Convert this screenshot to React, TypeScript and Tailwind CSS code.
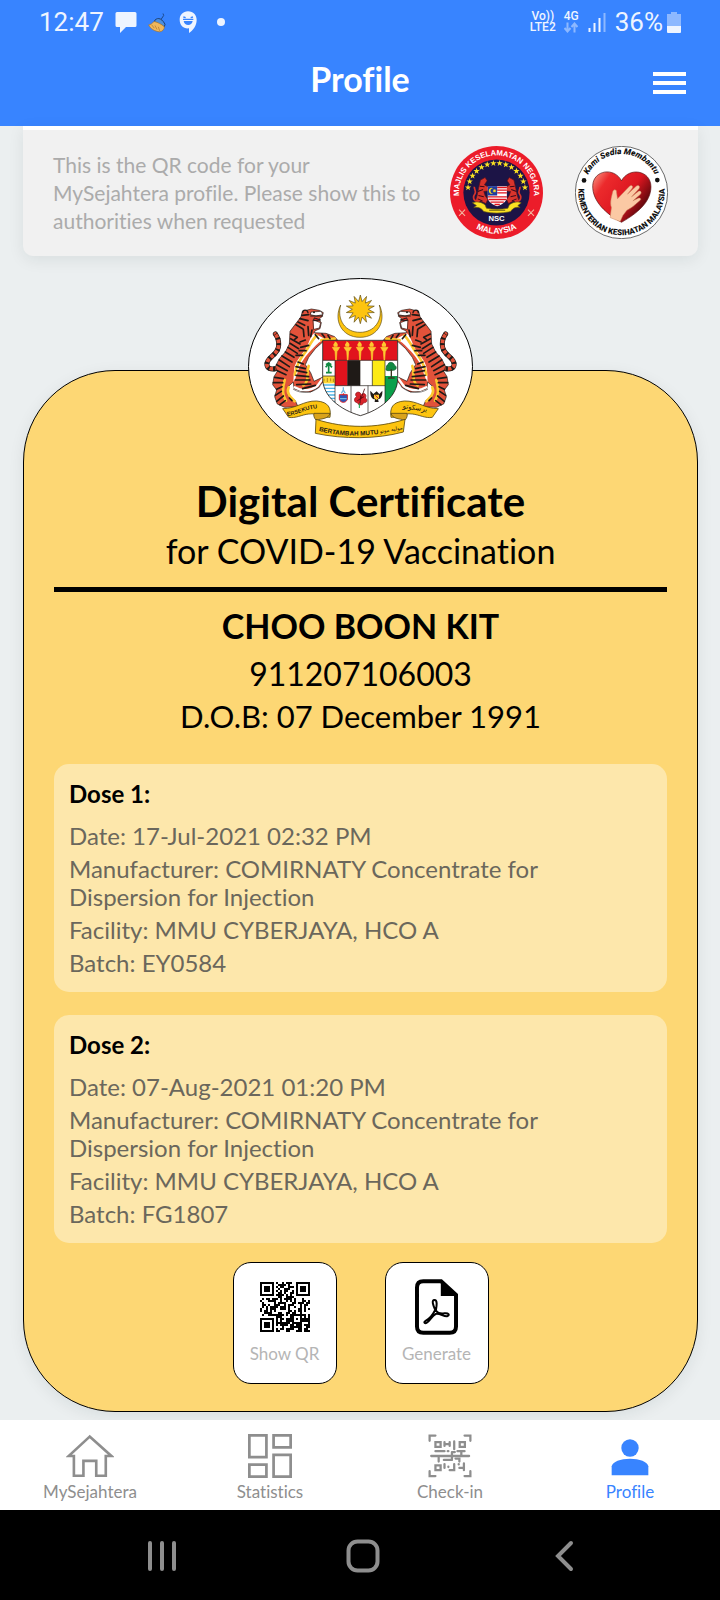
import React from 'react';

const doses = [
  {
    title: 'Dose 1:',
    lines: [
      'Date: 17-Jul-2021 02:32 PM',
      'Manufacturer: COMIRNATY Concentrate for Dispersion for Injection',
      'Facility: MMU CYBERJAYA, HCO A',
      'Batch: EY0584',
    ],
  },
  {
    title: 'Dose 2:',
    lines: [
      'Date: 07-Aug-2021 01:20 PM',
      'Manufacturer: COMIRNATY Concentrate for Dispersion for Injection',
      'Facility: MMU CYBERJAYA, HCO A',
      'Batch: FG1807',
    ],
  },
];

function starPoints(cx: number, cy: number, outer: number, inner: number, tips: number) {
  const points: string[] = [];
  for (let i = 0; i < tips * 2; i++) {
    const r = i % 2 === 0 ? outer : inner;
    const a = (Math.PI * i) / tips - Math.PI / 2;
    points.push(`${(cx + r * Math.cos(a)).toFixed(1)},${(cy + r * Math.sin(a)).toFixed(1)}`);
  }
  return points.join(' ');
}

function Tiger() {
  return (
    <g strokeLinecap="round" strokeLinejoin="round">
      <path d="M106 296C82 300 76 286 84 272C92 258 116 250 116 226C117 208 112 200 106 192" fill="none" stroke="#1f1a17" strokeWidth="15" />
      <path d="M106 296C82 300 76 286 84 272C92 258 116 250 116 226C117 208 112 200 106 192" fill="none" stroke="#e2523a" strokeWidth="11" />
      <path d="M106 296C82 300 76 286 84 272C92 258 116 250 116 226C117 208 112 200 106 192" fill="none" stroke="#1f1a17" strokeWidth="14" strokeDasharray="6 11" strokeLinecap="butt" />
      <path
        d="M188 124L214 117L238 121L250 128L246 140L236 148L244 158L240 176L226 182L222 188L258 190L284 200L294 212L248 216L226 236L206 262L196 284L212 308L222 334L247 322L250 334L236 352L212 366L184 364L162 356L160 336L142 352L144 376L166 392L174 410L134 412L112 402L104 380L110 360L98 344L102 320L112 304L106 290L118 266L136 246L148 222L150 184L168 160L182 142Z"
        fill="#e2523a"
        stroke="#1f1a17"
        strokeWidth="2"
      />
      <path d="M222 190C206 206 208 226 190 246C178 264 164 278 162 300L160 336C170 322 172 306 178 290C190 264 212 240 236 218L254 206Z" fill="#fff" />
      <path d="M230 196C212 214 206 234 192 252C178 270 170 286 164 314M206 288C198 308 210 334 190 346M146 352C138 370 152 382 164 394M244 210L284 206M134 330C128 350 126 374 138 392" fill="none" stroke="#fdc82f" strokeWidth="8" />
      <path d="M164 352C180 362 208 366 232 348L248 326" fill="none" stroke="#fff" strokeWidth="7" />
      <path d="M160 358C182 372 216 372 240 350" fill="none" stroke="#1f1a17" strokeWidth="1.5" />
      <path
        d="M152 192L172 202L164 208M152 206L180 222M150 220L176 236M144 232L172 250M136 246L162 262M126 258L156 276M118 270L148 290M110 284L142 302M112 302L138 314M104 322L130 326M100 338L128 338M110 358L126 350M106 376L124 364M110 394L130 378M120 404L136 392M168 164L188 176M174 156L194 166M180 146L204 152M186 136L206 134M190 178L192 200M204 170L206 196M216 180L212 200M196 210L180 216M206 226L182 232M198 242L178 242M188 256L168 256M174 276L190 282M168 290L196 296M170 302L200 308M168 316L206 320M166 330L210 330M170 344L212 342M188 356L226 346M148 384L156 392M226 194L236 206M246 192L254 202M264 196L270 206"
        stroke="#1f1a17"
        strokeWidth="5"
        fill="none"
      />
      <path d="M214 126L244 124L248 134L228 138L212 134ZM220 150L242 158L238 174L222 178Z" fill="#fff" stroke="#1f1a17" strokeWidth="2" />
      <path d="M212 138L248 138M224 144L242 150L222 152Z" stroke="#1f1a17" strokeWidth="3" fill="#d8232a" />
      <circle cx="222" cy="127" r="3" fill="#1f1a17" />
      <path d="M188 128C188 118 202 118 204 128" fill="#e2523a" stroke="#1f1a17" strokeWidth="4" />
    </g>
  );
}

function Torch({ x }: { x: number }) {
  return (
    <g>
      <path d={`M${x - 11} 232H${x + 11}L${x + 5} 242H${x - 5}ZM${x - 3} 242H${x + 3}L${x + 1} 270H${x - 1}Z`} fill="#fdc82f" stroke="#fdc82f" strokeWidth="2" />
      <path d={`M${x - 6} 230C${x - 12} 220 ${x - 2} 222 ${x - 4} 214C${x + 4} 218 ${x + 8} 224 ${x + 4} 230Z`} fill="#fdc82f" />
    </g>
  );
}

function CoatOfArms() {
  return (
    <svg viewBox="24 24 675 531" className="w-[225px] h-[177px]" role="img" aria-label="Coat of arms of Malaysia">
      <defs>
        <clipPath id="shield">
          <path d="M248 211H473V325C473 380 420 420 361 437C302 420 248 380 248 325Z" />
        </clipPath>
        <path id="motto-left" d="M142 438C176 434 206 412 248 414" />
        <path id="motto-mid" d="M236 482C290 498 350 500 414 492" />
      </defs>
      <ellipse cx="361.5" cy="289.5" rx="336" ry="264" fill="#fff" stroke="#000" strokeWidth="3" />
      <path d="M302 105C280 150 304 202 360 202C416 202 440 150 418 105C430 150 404 187 360 187C316 187 290 150 302 105Z" fill="#fdc40f" stroke="#5c4a12" strokeWidth="2" />
      <polygon points={starPoints(361, 118, 43, 24, 14)} fill="#fdc40f" stroke="#5c4a12" strokeWidth="2" />
      <Tiger />
      <g transform="translate(723 0) scale(-1 1)">
        <Tiger />
      </g>
      <g clipPath="url(#shield)">
        <rect x="248" y="211" width="225" height="230" fill="#fff" />
        <rect x="248" y="211" width="225" height="60" fill="#e1131d" />
        <rect x="285" y="271" width="38" height="76" fill="#e1131d" />
        <rect x="323" y="271" width="37" height="76" fill="#1f1a17" />
        <rect x="397" y="271" width="38" height="76" fill="#fdea14" />
        <rect x="248" y="318" width="37" height="22" fill="#fdd835" />
        <path d="M248 345H285M248 355H285M248 365H285M248 375H285M248 385H285M248 395H285" stroke="#4fb4e6" strokeWidth="4" />
        <rect x="435" y="318" width="40" height="110" fill="#0aa04b" />
        <path d="M285 271V402M323 271V347M360 271V347M397 271V347M435 271V402M285 347H435M333 347V426M384 347V430M248 271H473M248 318H285" stroke="#1f1a17" strokeWidth="2" fill="none" />
      </g>
      <path d="M248 211H473V325C473 380 420 420 361 437C302 420 248 380 248 325Z" fill="none" stroke="#1f1a17" strokeWidth="2.5" />
      <Torch x={288} />
      <Torch x={323} />
      <Torch x={360} />
      <Torch x={396} />
      <Torch x={433} />
      <path d="M266 280V306M258 308H275M258 284L266 279L274 284M257 292L266 281L276 292" stroke="#118a43" strokeWidth="5" fill="none" />
      <path d="M252 334V326M262 336V324M272 334V325M280 336V326" stroke="#b58b18" strokeWidth="3" />
      <path d="M439 294C438 284 446 284 446 279C454 274 462 280 463 285C472 290 470 300 460 301L444 302C438 302 436 298 439 294Z" fill="#118a43" stroke="#0b5a2a" strokeWidth="2" />
      <path d="M454 298V322M444 324H464" stroke="#3a3a20" strokeWidth="4" />
      <path d="M298 374H322V388C318 400 302 400 298 388Z" fill="#2b57b5" stroke="#d8232a" strokeWidth="3" />
      <path d="M300 386H320M304 370L310 360L316 370M310 352V362" stroke="#6fb7e2" strokeWidth="4" fill="none" />
      <path d="M306 376L310 368L314 376Z" fill="#d8232a" />
      <path d="M360 368C350 362 342 374 350 380C340 384 342 398 352 398C356 408 370 406 370 398C382 400 384 388 376 384C382 374 372 366 364 374Z" fill="#d8232a" stroke="#8d1016" strokeWidth="2" />
      <path d="M363 386L374 356M352 392L372 380M362 376L360 400" stroke="#520a0e" strokeWidth="2.5" />
      <path d="M358 400V414" stroke="#0aa04b" strokeWidth="3" />
      <path d="M391 362C390 378 396 388 405 388L404 396H416L414 388C424 386 428 376 427 362L418 372L410 364L400 372Z" fill="#1f1a17" />
      <path d="M402 374H417V384L410 390L402 384Z" fill="#fdc82f" />
      <path d="M406 376L414 384" stroke="#d8232a" strokeWidth="3" />
      <path d="M128 416C170 416 190 392 230 393C266 396 274 414 270 442L232 440C222 428 216 432 206 432C186 434 166 446 146 442Z" fill="#fdc40f" stroke="#5c4a12" strokeWidth="2.5" />
      <path d="M595 416C553 416 533 392 493 393C457 396 449 414 453 442L491 440C501 428 507 432 517 432C537 434 557 446 577 442Z" fill="#fdc40f" stroke="#5c4a12" strokeWidth="2.5" />
      <path d="M222 430L270 430C266 446 248 446 228 450C222 444 220 436 222 430ZM501 430L453 430C457 446 475 446 495 450C501 444 503 436 501 430Z" fill="#d9a31b" stroke="#5c4a12" strokeWidth="2.5" />
      <path d="M228 448C316 476 408 476 495 448L490 486C410 508 310 508 226 490Z" fill="#fdc40f" stroke="#5c4a12" strokeWidth="2.5" />
      <g fill="#1f1a17" className="font-['Liberation_Sans',sans-serif] font-bold">
        <text fontSize="17"><textPath href="#motto-left">ERSEKUTU</textPath></text>
        <text fontSize="19"><textPath href="#motto-mid">BERTAMBAH MUTU</textPath></text>
      </g>
      <g fill="#1f1a17" className="font-['DejaVu_Sans',sans-serif]">
        <text fontSize="16" textAnchor="middle" transform="translate(454 484) rotate(-10)">موليه موتو</text>
        <text fontSize="21" textAnchor="middle" transform="translate(524 420) rotate(8)">برسكوتو</text>
      </g>
    </svg>
  );
}

function CouncilSeal() {
  const stars = Array.from({ length: 14 }, (_, i) => {
    const a = Math.PI + 0.15 + ((Math.PI - 0.3) * i) / 13;
    return starPoints(170 + 86 * Math.cos(a), 185 + 86 * Math.sin(a), 10, 4, 5);
  });
  return (
    <svg viewBox="31 48 278 278" className="size-[93px] shrink-0" role="img" aria-label="Majlis Keselamatan Negara">
      <defs>
        <path id="nsc-top" d="M62 218A112 112 0 1 1 278 218" />
        <path id="nsc-bottom" d="M54 230A124 124 0 0 0 286 230" />
      </defs>
      <circle cx="170" cy="187" r="139" fill="#ec1c2a" />
      <circle cx="170" cy="187" r="99" fill="#1c1446" />
      <g fill="#fff" className="font-['Liberation_Sans',sans-serif] font-bold">
        <text fontSize="23" textAnchor="middle"><textPath href="#nsc-top" startOffset="50%">MAJLIS KESELAMATAN NEGARA</textPath></text>
        <text fontSize="25" textAnchor="middle"><textPath href="#nsc-bottom" startOffset="50%">MALAYSIA</textPath></text>
        <text x="170" y="273" fontSize="23" textAnchor="middle">NSC</text>
      </g>
      {stars.map((s) => (
        <polygon key={s} points={s} fill="#fbe122" />
      ))}
      <path d="M58 238L76 257M76 238L58 257M264 238L282 257M282 238L264 257" stroke="#f3b8a0" strokeWidth="3" />
      <g id="nsc-tiger">
        <path d="M122 150L136 142L142 152L134 164L148 172L146 182L132 184L136 196L144 208L138 220L122 212L114 222L106 214L112 196L116 176Z" fill="#d8342c" stroke="#5b1018" strokeWidth="2" />
        <path d="M114 184L130 178M116 196L132 200M120 168L134 170M114 206L128 212" stroke="#39091a" strokeWidth="3" />
        <path d="M112 214C98 210 100 198 106 190C110 182 102 176 104 170" stroke="#d8342c" strokeWidth="5" fill="none" />
      </g>
      <use href="#nsc-tiger" transform="translate(344 0) scale(-1 1)" />
      <path d="M144 168H201V204C198 216 184 224 172 228C160 224 146 216 144 204Z" fill="#fff" />
      <path d="M172 172H201M172 180H201M172 188H201M144 200H201M146 208H199M152 216H192M164 223H180" stroke="#e1131d" strokeWidth="4" />
      <rect x="144" y="168" width="28" height="28" fill="#203a9c" />
      <path d="M160 174A9 9 0 1 0 160 190A7 7 0 1 1 160 174Z" fill="#fbe122" />
      <polygon points={starPoints(164, 182, 6, 3, 10)} fill="#fbe122" />
      <path d="M98 218C110 212 126 216 136 224L140 234C160 238 184 238 204 234L208 224C218 216 234 212 244 218L234 226L240 232C228 230 220 232 212 244C184 250 158 250 132 244C124 232 114 230 102 232L110 226Z" fill="#fbe122" stroke="#6a5a10" strokeWidth="2" />
      <path d="M148 240H196" stroke="#6a5a10" strokeWidth="3" />
    </svg>
  );
}

function MinistrySeal() {
  return (
    <svg viewBox="405 48 278 278" className="size-[93px] shrink-0" role="img" aria-label="Kementerian Kesihatan Malaysia">
      <defs>
        <linearGradient id="heart" x1="0" y1="0" x2="1" y2="0.6">
          <stop offset="0" stopColor="#f9a08c" />
          <stop offset="0.25" stopColor="#ec2a2c" />
          <stop offset="0.65" stopColor="#dc1620" />
          <stop offset="1" stopColor="#4a0508" />
        </linearGradient>
        <path id="moh-top" d="M434 163A112 112 0 0 1 654 163" />
        <path id="moh-bottom" d="M418 158A129 129 0 1 0 670 158" />
      </defs>
      <circle cx="544" cy="187" r="138" fill="#fff" stroke="#222" strokeWidth="2" />
      <g fill="#111" className="font-[Roboto,sans-serif] font-black">
        <text fontSize="25" fontStyle="italic" textAnchor="middle"><textPath href="#moh-top" startOffset="50%">Kami Sedia Membantu</textPath></text>
        <text fontSize="24" textAnchor="middle"><textPath href="#moh-bottom" startOffset="50%">KEMENTERIAN KESIHATAN MALAYSIA</textPath></text>
      </g>
      <circle cx="432" cy="151" r="7" fill="#111" />
      <circle cx="651" cy="150" r="7" fill="#111" />
      <path d="M544 276C500 252 456 214 458 166C460 120 522 110 544 152C566 110 632 120 632 170C632 216 590 250 544 276Z" fill="url(#heart)" stroke="#5a0a0c" strokeWidth="2" />
      <path d="M510 262L514 232C508 216 516 194 518 184C521 176 530 178 529 186L532 206L568 168C574 163 580 168 576 174L562 192L588 168C595 163 601 169 596 176L574 200L594 184C601 180 606 187 600 193L578 212L594 204C601 202 604 208 598 212C584 224 574 234 560 240L548 256L540 274Z" fill="#fbc9a4" stroke="#c98660" strokeWidth="1.5" />
    </svg>
  );
}

const QR_SIZE = 25;

function isFinder(x: number, y: number, ox: number, oy: number) {
  const dx = x - ox;
  const dy = y - oy;
  if (dx < -1 || dy < -1 || dx > 7 || dy > 7) return null;
  if (dx < 0 || dy < 0 || dx > 6 || dy > 6) return false;
  const ring = Math.max(Math.abs(dx - 3), Math.abs(dy - 3));
  return ring === 3 || ring <= 1;
}

function qrPath() {
  let d = '';
  let seed = 91;
  for (let y = 0; y < QR_SIZE; y++) {
    for (let x = 0; x < QR_SIZE; x++) {
      seed = (seed * 1103515245 + 12345) % 2147483648;
      let on = (seed / 2147483648) > 0.46;
      for (const [ox, oy] of [[0, 0], [QR_SIZE - 7, 0], [0, QR_SIZE - 7]]) {
        const f = isFinder(x, y, ox, oy);
        if (f !== null) on = f;
      }
      const ring = Math.max(Math.abs(x - 18), Math.abs(y - 18));
      if (ring <= 2) on = ring !== 1;
      if (on) d += `M${x} ${y}h1v1h-1z`;
    }
  }
  return d;
}

function QrIcon() {
  return (
    <svg viewBox="0 0 25 25" className="size-[50px]" shapeRendering="crispEdges" aria-hidden="true">
      <path d={qrPath()} />
    </svg>
  );
}

function PdfIcon() {
  return (
    <svg viewBox="645 117 130 168" className="h-14 w-[43px]" aria-hidden="true">
      <path d="M670 123H724L769 164V260C769 272 762 279 750 279H670C658 279 651 272 651 260V142C651 130 658 123 670 123Z" fill="none" stroke="#000" strokeWidth="12" />
      <path d="M723 120L772 164L772 168H723Z" />
      <path d="M704 180C694 180 700 196 706 210C698 226 690 236 678 242C668 248 676 254 684 246C692 238 698 228 708 222C722 220 730 230 742 229C752 226 746 218 734 220C724 222 716 222 708 212C710 200 714 180 704 180Z" fill="none" stroke="#000" strokeWidth="6" strokeLinejoin="round" />
    </svg>
  );
}

function StatusBar() {
  return (
    <div className="flex h-11 items-center justify-between pr-[39px] pl-[39px] font-[Roboto,sans-serif] text-[26px] leading-8 text-[#eef4ff]">
      <div className="flex items-center">
        <span>12:47</span>
        <svg viewBox="0 0 22 22" className="ml-[11px] size-[22px]" aria-hidden="true">
          <path d="M2 1H20Q21.500 1 21.500 2.500V14.500Q21.500 16 20 16H11L5 22V16H2Q0.500 16 0.500 14.500V2.500Q0.500 1 2 1Z" fill="currentColor" />
        </svg>
        <svg viewBox="445 32 54 62" className="ml-[11px] h-[21px] w-[18px]" aria-hidden="true">
          <path d="M490 36L492 42L484 54" stroke="#1c4a8c" strokeWidth="3" fill="none" />
          <path d="M463 60C470 48 484 46 496 68L494 76Z" fill="#4a8fe0" stroke="#1f3f73" strokeWidth="3" />
          <path d="M463 60C474 62 486 68 494 76C494 84 488 90 480 91C466 90 452 82 447 70C452 70 458 66 463 60Z" fill="#efb75c" stroke="#a8742c" strokeWidth="2" />
          <path d="M456 70L464 80M466 72L472 84M476 76L480 88" stroke="#a8742c" strokeWidth="2" />
        </svg>
        <svg viewBox="538 30 54 66" className="ml-[13px] h-[22px] w-[18px]" aria-hidden="true">
          <path d="M565 31C581 31 591 43 591 56C591 74 580 88 568 96V82C551 84 540 72 540 56C540 42 550 31 565 31Z" fill="currentColor" />
          <path d="M550 55H581M551 48L558 50M580 48L573 50" stroke="#3884ff" strokeWidth="4" />
          <path d="M552 60H579C577 76 554 76 552 60Z" fill="#3884ff" />
        </svg>
        <span className="ml-5 size-2 rounded-full bg-[#eef4ff]" />
      </div>
      <div className="flex items-center">
        <div className="flex flex-col items-center text-[12px] leading-[11px] font-medium">
          <span>Vo))</span>
          <span>LTE2</span>
        </div>
        <div className="ml-2 flex flex-col items-center text-[12px] leading-[11px] font-medium">
          <span>4G</span>
          <svg viewBox="0 0 14 10" className="h-[11px] w-[14px] text-[#8db8ff]" aria-hidden="true">
            <path d="M3.500 0V8M0.500 5.500L3.500 9L6.500 5.500M10.500 10V2M7.500 4.500L10.500 1L13.500 4.500" stroke="currentColor" strokeWidth="2" fill="none" />
          </svg>
        </div>
        <svg viewBox="0 0 18 19" className="ml-[9px] h-[19px] w-[18px]" aria-hidden="true">
          <path d="M1.500 15V19M6.500 10V19M11.500 5V19" stroke="#eef4ff" strokeWidth="2" />
          <path d="M16.500 0V19" stroke="#8db8ff" strokeWidth="2" />
        </svg>
        <span className="ml-[9px]">36%</span>
        <svg viewBox="0 0 14 21" className="ml-1 h-[21px] w-[14px]" aria-hidden="true">
          <path d="M4 0H10V2H14V15H0V2H4Z" fill="#8db8ff" />
          <path d="M0 14H14V20Q14 21 13 21H1Q0 21 0 20Z" fill="#eef4ff" />
        </svg>
      </div>
    </div>
  );
}

function HomeIcon() {
  return (
    <svg viewBox="199 105 146 130" className="h-11 w-12" aria-hidden="true">
      <path d="M271 111L207 170H223V230H252V185H291V230H320V170H337Z" fill="none" stroke="currentColor" strokeWidth="8" />
    </svg>
  );
}

function StatisticsIcon() {
  return (
    <svg viewBox="747 105 129 129" className="size-11" aria-hidden="true">
      <path d="M751 109H801V173H751ZM751 195H801V230H751ZM822 109H872V144H822ZM822 166H872V230H822Z" fill="none" stroke="currentColor" strokeWidth="8" />
    </svg>
  );
}

function CheckInIcon() {
  return (
    <svg viewBox="203 101 136 136" className="size-11" aria-hidden="true">
      <g fill="none" stroke="currentColor" strokeWidth="7" strokeLinecap="round">
        <path d="M208 122V106H226M316 106H334V122M208 216V231H226M316 231H334V216" />
        <path d="M213 169H330" />
        <path d="M226 126H242V141H226ZM301 126H317V141H301ZM226 198H242V213H226Z" />
        <path d="M254 126V138M270 126V138M256 132H268M284 124V148M226 154H254M264 154H266M277 157V180M277 157H286M294 154H316M306 157V168" />
        <path d="M236 174V186M252 181H277M288 177H300V186M254 194V206M266 202V203M284 194V213H270M298 194V195M314 192V213M300 206H312" />
      </g>
    </svg>
  );
}

function ProfileIcon() {
  return (
    <svg viewBox="744 101 132 132" className="size-11" aria-hidden="true">
      <circle cx="810" cy="143" r="26" fill="currentColor" />
      <path d="M755 225V198C757 184 782 175 810 175C838 175 863 184 865 198V225Z" fill="currentColor" />
    </svg>
  );
}

const tabs = [
  { label: 'MySejahtera', Icon: HomeIcon, active: false },
  { label: 'Statistics', Icon: StatisticsIcon, active: false },
  { label: 'Check-in', Icon: CheckInIcon, active: false },
  { label: 'Profile', Icon: ProfileIcon, active: true },
];

export default function App() {
  return (
    <div className="flex min-h-screen flex-col bg-[#ebeff0] font-[Lato,sans-serif] text-black [font-variant-ligatures:none]">
      <header className="bg-[#3884ff] text-white">
        <StatusBar />
        <div className="grid h-[82px] grid-cols-[1fr_auto_1fr] items-center px-[34px] pb-2">
          <h1 className="col-start-2 pb-1 text-[34px] leading-10 font-bold">Profile</h1>
          <button type="button" aria-label="Menu" className="flex w-[33px] flex-col gap-[5px] justify-self-end pt-1">
            <span className="h-1 w-full bg-white" />
            <span className="h-1 w-full bg-white" />
            <span className="h-1 w-full bg-white" />
          </button>
        </div>
      </header>

      <main className="flex flex-1 flex-col pr-[22px] pb-2 pl-[23px]">
        <section className="flex items-center justify-between gap-4 rounded-b-[10px] border-t-4 border-white bg-[#f1f1f1] px-[30px] pt-4 pb-[17px] shadow-[0_4px_16px_rgba(0,40,40,0.08)]">
          <p className="max-w-[375px] text-[21px] leading-7 text-[#ababab]">
            This is the QR code for your MySejahtera profile. Please show this to authorities when requested
          </p>
          <div className="flex gap-8">
            <CouncilSeal />
            <MinistrySeal />
          </div>
        </section>

        <div className="relative z-10 mt-[22px] -mb-[85px] flex justify-center">
          <CoatOfArms />
        </div>

        <section className="flex flex-1 flex-col rounded-[92px] border border-black bg-[#fdd774] px-[30px] pt-[106px] pb-[26px] shadow-[0_4px_16px_rgba(0,40,40,0.08)]">
          <div className="text-center">
            <h2 className="text-[42px] leading-[48px] font-bold">Digital Certificate</h2>
            <p className="mt-1 text-[34px] leading-[44px]">for COVID-19 Vaccination</p>
          </div>
          <hr className="mt-[14px] border-t-[5px] border-black" />
          <div className="mt-3 text-center">
            <p className="text-[34px] leading-[44px] font-bold">CHOO BOON KIT</p>
            <p className="mt-1 text-[32px] leading-[44px]">911207106003</p>
            <p className="text-[31px] leading-10">D.O.B: 07 December 1991</p>
          </div>

          <div className="mt-7 flex flex-col gap-[23px]">
            {doses.map((dose) => (
              <article key={dose.title} className="rounded-[15px] bg-[#fde7ab] px-[15px] pt-4 pb-[15px]">
                <h3 className="text-[24px] leading-7 font-bold">{dose.title}</h3>
                <div className="mt-[14px] flex max-w-[500px] flex-col gap-[5px] text-[24px] leading-7 text-[#6b675c]">
                  {dose.lines.map((line) => (
                    <p key={line}>{line}</p>
                  ))}
                </div>
              </article>
            ))}
          </div>

          <div className="mt-[19px] flex justify-center gap-12">
            <button type="button" className="flex h-[122px] w-[104px] flex-col items-center rounded-[18px] border border-black bg-white pt-4">
              <span className="flex h-14 items-center"><QrIcon /></span>
              <span className="mt-[7px] text-[17px] leading-6 text-[#b5b5b5]">Show QR</span>
            </button>
            <button type="button" className="flex h-[122px] w-[104px] flex-col items-center rounded-[18px] border border-black bg-white pt-4">
              <PdfIcon />
              <span className="mt-[7px] text-[17px] leading-6 text-[#b5b5b5]">Generate</span>
            </button>
          </div>
        </section>
      </main>

      <nav className="grid h-[90px] grid-cols-4 bg-white pt-[14px]">
        {tabs.map(({ label, Icon, active }) => (
          <a
            key={label}
            href="#"
            aria-current={active ? 'page' : undefined}
            className={`flex flex-col items-center ${active ? 'text-[#3884ff]' : 'text-[#8e8e8e]'}`}
          >
            <Icon />
            <span className="mt-0.5 text-[17px] leading-6">{label}</span>
          </a>
        ))}
      </nav>

      <div className="grid h-[90px] grid-cols-3 items-center bg-black pt-0.5 pr-[55px] pl-[61px] text-[#8e8e8e]">
        <button type="button" aria-label="Recent apps" className="justify-self-center">
          <svg viewBox="0 0 30 32" className="h-8 w-[30px]" aria-hidden="true">
            <path d="M3 3V29M15 3V29M27 3V29" stroke="currentColor" strokeWidth="4" strokeLinecap="round" />
          </svg>
        </button>
        <button type="button" aria-label="Home" className="justify-self-center">
          <svg viewBox="0 0 34 34" className="size-[34px]" aria-hidden="true">
            <rect x="2.500" y="2.500" width="29" height="29" rx="9" fill="none" stroke="currentColor" strokeWidth="4" />
          </svg>
        </button>
        <button type="button" aria-label="Back" className="justify-self-center">
          <svg viewBox="0 0 20 32" className="h-8 w-5" aria-hidden="true">
            <path d="M17 3L4 16L17 29" fill="none" stroke="currentColor" strokeWidth="4" strokeLinecap="round" />
          </svg>
        </button>
      </div>
    </div>
  );
}
